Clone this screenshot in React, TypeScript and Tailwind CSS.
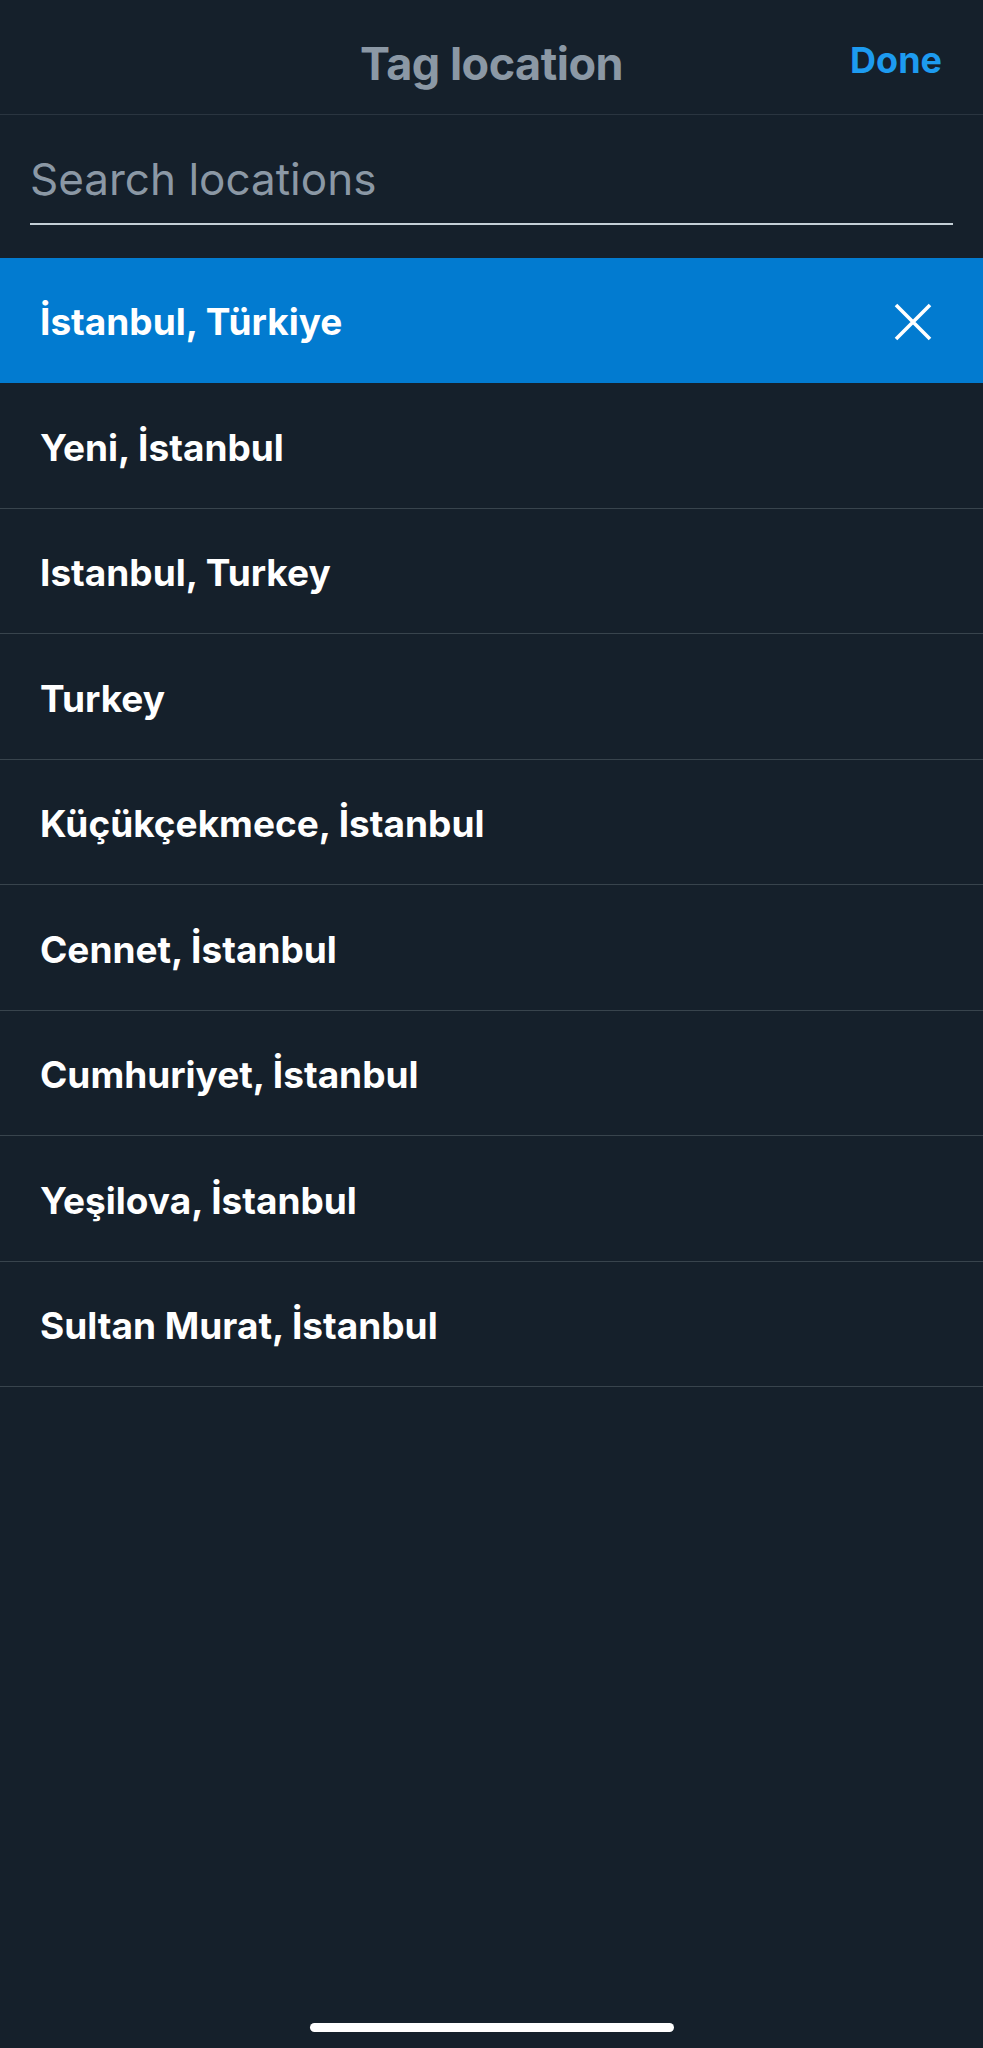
const places = [
  "Yeni, İstanbul",
  "Istanbul, Turkey",
  "Turkey",
  "Küçükçekmece, İstanbul",
  "Cennet, İstanbul",
  "Cumhuriyet, İstanbul",
  "Yeşilova, İstanbul",
  "Sultan Murat, İstanbul",
];

export default function App() {
  return (
    <div
      className="w-[983px] h-[2048px] bg-[#15202b] flex flex-col text-white"
      style={{ fontFamily: "Inter, 'Liberation Sans', sans-serif" }}
    >
      {/* header */}
      <div className="h-[115px] shrink-0 grid grid-cols-[1fr_auto_1fr] items-center border-b border-[#2a3540] px-[41px]">
        <div />
        <h1 className="text-[45px] font-bold text-[#8b98a5] tracking-[-0.5px] pt-[14px]">Tag location</h1>
        <div className="flex justify-end pt-[6px]">
          <button className="text-[36px] font-bold text-[#1d9bf0]">Done</button>
        </div>
      </div>

      {/* search */}
      <div className="h-[143px] shrink-0 px-[30px] pt-[34px]">
        <input
          className="w-full bg-transparent outline-none text-[44px] leading-[60px] text-white placeholder:text-[#8b98a5] border-b-2 border-[#c4cfd6] pb-[14px]"
          placeholder="Search locations"
        />
      </div>

      {/* results */}
      <div className="flex flex-col">
        <div className="h-[125px] bg-[#027bd0] flex items-center justify-between pl-[40px] pr-[51px] pt-[2px]">
          <span className="text-[37px] font-bold">İstanbul, Türkiye</span>
          <svg width="38" height="38" viewBox="0 0 38 38" stroke="white" strokeWidth="3.6" fill="none">
            <path d="M2 2L36 36M36 2L2 36" />
          </svg>
        </div>
        {places.map((p) => (
          <div key={p} className="h-[125.5px] flex items-center pl-[40px] pt-[4px] border-b border-[#38444d]">
            <span className="text-[37px] font-bold">{p}</span>
          </div>
        ))}
      </div>

      <div className="flex-1" />
      <div className="h-[25px] shrink-0 flex justify-center">
        <div className="w-[364px] h-[9px] rounded-full bg-white" />
      </div>
    </div>
  );
}
